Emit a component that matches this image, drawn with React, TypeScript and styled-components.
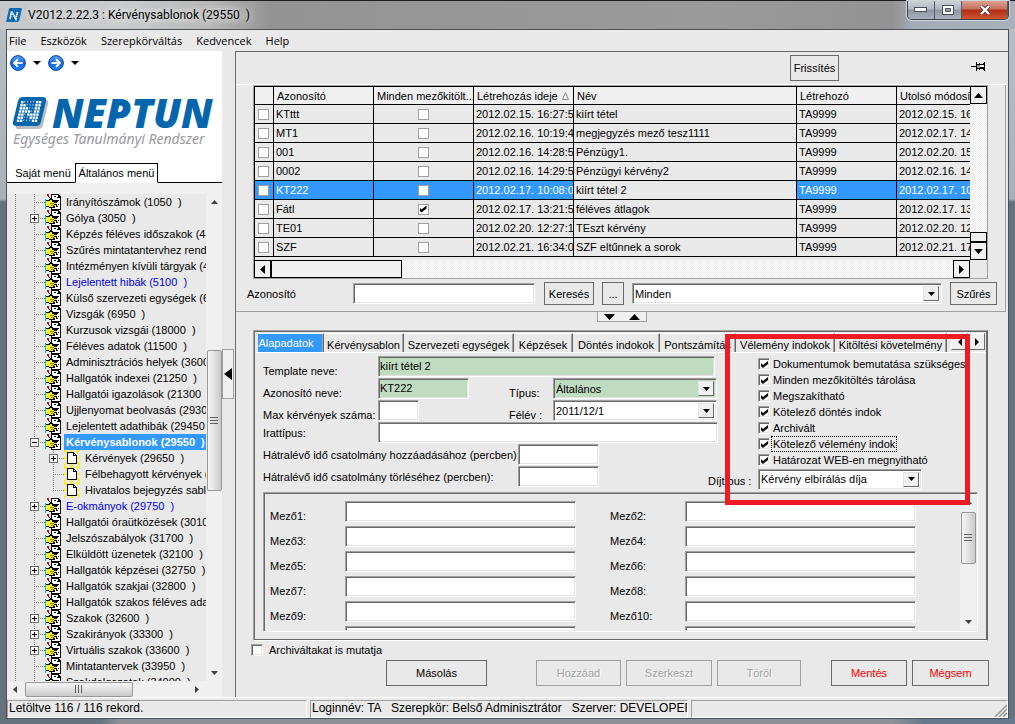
import React from "react";
import styled, { createGlobalStyle, css } from "styled-components";

const face = "#e9e9e9";
const accent = "#3399ff";
const shade = "#a0a0a0";
const dark = "#696969";

const GlobalStyle = createGlobalStyle`
  *, *::before, *::after { box-sizing: border-box; }
  html, body { margin: 0; padding: 0; }
  body { font-family: "Liberation Sans", Arial, sans-serif; font-size: 11px; line-height: 14px; color: #000; }
  button, input, select { font: inherit; color: inherit; margin: 0; }
  svg { flex: none; }
`;

/* ---------- window frame ---------- */

const Window = styled.div`
  height: 100vh;
  min-height: 700px;
  display: flex;
  flex-direction: column;
  padding: 0 6px 5px;
  overflow: hidden;
  background:
    linear-gradient(to right, #66747f 0, #66747f 100px, #8d9196 120px, #8d9196 88%, #66788c 91%) bottom / 100% 6px no-repeat,
    linear-gradient(to bottom, #b9bfc5 0, #a9b0b8 199px, #66727e 202px, #66727e 100%);
`;

const TitleBar = styled.header`
  display: flex;
  align-items: center;
  gap: 6px;
  height: 29px;
  flex: none;
  margin: 0 -6px;
  padding: 0 6px;
  border-top: 1px solid #1b1b22;
  background: linear-gradient(to right, #c4c8cb 0, #c9cbcc 120px, #b7b7b7 210px, #949494 270px, #9a9a9a 70%, #939393 88%, #a4acb8 90%, #a9b1bc 100%);
`;

const TitleText = styled.h1`
  flex: 1;
  margin: 0;
  font: 12px/20px Roboto, "Noto Sans", sans-serif;
  white-space: pre;
  text-shadow: 0 0 6px #eee, 0 0 8px #eee;
`;

const CaptionButtons = styled.div`
  display: flex;
  align-self: flex-start;
  border: 1px solid #3d444d;
  border-top: 0;
  border-radius: 0 0 5px 5px;
  overflow: hidden;
  box-shadow: 0 0 0 1px #d0d5da;
`;

const CaptionButton = styled.button<{ $close?: boolean }>`
  display: flex;
  align-items: center;
  justify-content: center;
  width: ${(p) => (p.$close ? 46 : 27)}px;
  height: 18px;
  padding: 0;
  border: 0;
  border-right: 1px solid #535b66;
  background: ${(p) =>
    p.$close
      ? "linear-gradient(#dca191 0, #c8705c 45%, #b02c12 50%, #d05530 100%)"
      : "linear-gradient(#cdd2d9 0, #b1b8c2 45%, #8c95a2 50%, #a9b1bd 100%)"};
`;

const Client = styled.div`
  flex: 1;
  min-height: 0;
  display: flex;
  flex-direction: column;
  border: 1px solid #4b5157;
  background: ${face};
`;

const MenuBar = styled.nav`
  display: flex;
  flex: none;
  gap: 14px;
  height: 21px;
  padding: 0 2px;
  font: 11px/20px "Open Sans", "Noto Sans", sans-serif;
`;

const MenuItem = styled.button`
  padding: 0;
  border: 0;
  background: none;
`;

const Body = styled.div`
  flex: 1;
  min-height: 0;
  display: flex;
`;

/* ---------- left side ---------- */

const Sidebar = styled.aside`
  width: 215px;
  flex: none;
  display: flex;
  flex-direction: column;
  background: #f0f0f0;
`;

const Brand = styled.div`
  height: 112px;
  flex: none;
  padding: 3px 2px 0;
  background: #fff;
`;

const NavRow = styled.div`
  display: flex;
  align-items: center;
  height: 18px;
`;

const NavButton = styled.button`
  display: flex;
  align-items: center;
  gap: 7px;
  width: 38px;
  padding: 0 0 0 1px;
  border: 0;
  background: none;
`;

const LogoRow = styled.div`
  display: flex;
  align-items: center;
  gap: 3px;
  height: 36px;
  margin-top: 23px;
  padding-left: 4px;
`;

const LogoName = styled.span`
  font: italic 800 40px/36px "Open Sans", sans-serif;
  color: #0566ad;
`;

const LogoTag = styled.p`
  margin: 0;
  padding-left: 4px;
  font: italic 14px/16px "Noto Sans", "Open Sans", sans-serif;
  color: #98999c;
  white-space: nowrap;
`;

const SideTabs = styled.div`
  display: flex;
  height: 20px;
  flex: none;
  background: #fff;
`;

const SideTab = styled.button<{ $on?: boolean }>`
  width: ${(p) => (p.$on ? 83 : 68)}px;
  padding: ${(p) => (p.$on ? "0" : "1px 0 0 4px")};
  text-align: center;
  background: #fff;
  border: 1px solid #000;
  border-bottom-color: ${(p) => (p.$on ? "#fff" : "#000")};
  white-space: nowrap;
  ${(p) => !p.$on && css`border-width: 0 0 1px;`}
`;

const SideTabRest = styled.div`
  flex: 1;
  border-bottom: 1px solid #000;
`;

const TreeArea = styled.div`
  display: flex;
  flex: 1;
  min-height: 0;
  margin-top: 11px;
`;

const Tree = styled.ul`
  flex: 1;
  min-width: 0;
  margin: 0;
  padding: 0;
  overflow: hidden;
  list-style: none;
  background: ${face};
`;

const TreeRow = styled.li`
  display: flex;
  height: 16px;
  white-space: pre;
`;

const TreeLabel = styled.span<{ $on?: boolean; $blue?: boolean }>`
  flex: 1;
  margin-left: 3px;
  padding-left: 2px;
  line-height: 16px;
  color: ${(p) => (p.$on ? "#fff" : p.$blue ? "#0000f0" : "#000")};
  ${(p) => p.$on && css`background: ${accent}; font-weight: bold;`}
`;

/* ---------- scroll bars ---------- */

const SoftBar = styled.div<{ $across?: boolean }>`
  display: flex;
  flex: none;
  align-items: center;
  flex-direction: ${(p) => (p.$across ? "row" : "column")};
  ${(p) => (p.$across ? "height: 16px;" : "width: 16px;")}
  background: #f0f0f0;
`;

const SoftArrow = styled.button`
  display: flex;
  align-items: center;
  justify-content: center;
  flex: none;
  width: 16px;
  height: 16px;
  padding: 0;
  border: 0;
  background: none;
`;

const SoftThumb = styled.div<{ $across?: boolean; $size: number }>`
  display: flex;
  flex: none;
  align-items: center;
  justify-content: center;
  border: 1px solid #979797;
  border-radius: 2px;
  ${(p) =>
    p.$across
      ? css`width: ${p.$size}px; height: 15px; background: linear-gradient(#f5f5f5, #e3e3e3 45%, #c9c9cb);`
      : css`height: ${p.$size}px; width: 15px; background: linear-gradient(to right, #f5f5f5, #e3e3e3 45%, #c9c9cb);`}
`;

const Spring = styled.div<{ $grow?: number }>`
  flex: ${(p) => p.$grow ?? 1};
`;

const HardBar = styled.div<{ $across?: boolean }>`
  display: flex;
  flex: none;
  flex-direction: ${(p) => (p.$across ? "row" : "column")};
  ${(p) => (p.$across ? "height: 18px;" : "width: 17px;")}
  background: repeating-conic-gradient(#fff 0 25%, #eaeaea 0 50%) 0 0 / 2px 2px;
`;

const HardArrow = styled.button`
  display: flex;
  align-items: center;
  justify-content: center;
  flex: none;
  width: 17px;
  height: 18px;
  padding: 0;
  border: 1px solid #000;
  background: #f0f0f0;
`;

const HardThumb = styled.div<{ $w: number; $h: number }>`
  width: ${(p) => p.$w}px;
  height: ${(p) => p.$h}px;
  border: 1px solid #000;
  background: #f0f0f0;
`;

/* ---------- splitters ---------- */

const SideSplitter = styled.div`
  display: flex;
  flex: none;
  flex-direction: column;
  width: 13px;
`;

const CollapseSide = styled.button`
  display: flex;
  align-items: center;
  justify-content: center;
  width: 12px;
  height: 50px;
  padding: 0;
  border: 1px solid ${shade};
  background: #f0f0f0;
`;

const MidSplitter = styled.div`
  display: flex;
  justify-content: center;
  flex: none;
  height: 18px;
`;

const CollapseMid = styled.button`
  display: flex;
  align-items: center;
  justify-content: center;
  gap: 14px;
  width: 50px;
  height: 10px;
  padding: 0;
  border: 1px solid ${shade};
  border-top: 0;
  background: #f0f0f0;
`;

/* ---------- controls ---------- */

const Button = styled.button<{ $w: number; $tall?: boolean; $red?: boolean }>`
  width: ${(p) => p.$w}px;
  height: ${(p) => (p.$tall ? 26 : 23)}px;
  flex: none;
  padding: 0;
  border: 1px solid ${dark};
  background: ${face};
  color: ${(p) => (p.$red ? "#f00" : "#000")};
  &:disabled {
    border-color: ${shade};
    color: ${shade};
    text-shadow: 1px 1px 0 #fff;
  }
`;

const sunken = css`
  border: 1px solid;
  border-color: ${shade} #fff #fff ${shade};
  box-shadow: inset 1px 1px 0 ${dark}, inset -1px -1px 0 #e3e3e3;
`;

const TextBox = styled.input<{ $w: number; $green?: boolean }>`
  ${sunken}
  width: ${(p) => p.$w}px;
  height: 21px;
  padding: 0 1px 1px;
  border-radius: 0;
  outline: 0;
  background: ${(p) => (p.$green ? "#c0dcc0" : "#fff")};
`;

const SelectFrame = styled.span<{ $w?: number; $green?: boolean }>`
  ${sunken}
  display: flex;
  height: 21px;
  padding: 2px;
  ${(p) => (p.$w ? `width: ${p.$w}px;` : "flex: 1;")}
  background: ${(p) => (p.$green ? "#c0dcc0" : "#fff")};
`;

const SelectBox = styled.select`
  appearance: none;
  flex: 1;
  min-width: 0;
  padding: 0;
  border: 0;
  outline: 0;
  background: none;
`;

const SelectArrow = styled.span`
  display: flex;
  align-items: center;
  justify-content: center;
  width: 16px;
  border: 1px solid;
  border-color: #e3e3e3 ${dark} ${dark} #e3e3e3;
  background: #f0f0f0;
`;

const Check = styled.input.attrs({ type: "checkbox" })<{ $flat?: boolean }>`
  appearance: none;
  display: inline-flex;
  flex: none;
  width: ${(p) => (p.$flat ? 11 : 12)}px;
  height: ${(p) => (p.$flat ? 11 : 12)}px;
  border: 1px solid ${shade};
  background: #fff;
  ${(p) => !p.$flat && sunken}
  &:checked::before {
    content: "";
    width: 7px;
    height: 7px;
    margin: ${(p) => (p.$flat ? "1px" : "2px 0 0 2px")};
    background: #000;
    clip-path: polygon(0 28%, 28% 57%, 100% 0, 100% 42%, 28% 100%, 0 72%);
  }
`;

/* ---------- right side ---------- */

const Main = styled.main`
  flex: 1;
  min-width: 0;
  display: flex;
  flex-direction: column;
  border-left: 1px solid ${dark};
  border-top: 1px solid ${dark};
`;

const ToolRow = styled.div`
  display: flex;
  flex: none;
  align-items: flex-start;
  justify-content: flex-end;
  height: 33px;
  margin-right: 2px;
  padding: 3px 20px 0 0;
  gap: 132px;
  border-bottom: 1px solid #fff;
`;

const PinButton = styled.button`
  padding: 6px 0 0;
  border: 0;
  background: none;
`;

const ListPanel = styled.section`
  flex: none;
  margin-right: 2px;
  padding: 0 17px 0 17px;
  border-right: 1px solid ${shade};
  border-bottom: 1px solid ${shade};
`;

const Grid = styled.div`
  display: grid;
  grid-template-columns: minmax(0, 1fr) 17px;
  border: 1px solid ${shade};
`;

const TableClip = styled.div`
  height: 174px;
  overflow: hidden;
  border-top: 1px solid #000;
  border-left: 1px solid #000;
`;

const Table = styled.table`
  width: calc(100% + 27px);
  table-layout: fixed;
  border-spacing: 0;
`;

const Col = styled.col<{ $w?: number }>`
  ${(p) => p.$w && `width: ${p.$w}px;`}
`;

const Th = styled.th`
  height: 18px;
  padding: 0 0 0 3px;
  border: solid #000;
  border-width: 0 1px 1px 0;
  background: #f0f0f0;
  font-weight: normal;
  text-align: left;
  white-space: nowrap;
  overflow: hidden;
`;

const SortMark = styled.svg`
  margin-left: 4px;
`;

const Td = styled.td<{ $on?: boolean; $center?: boolean }>`
  height: 19px;
  padding: 0 0 0 2px;
  border: solid #000;
  border-width: 0 1px 1px 0;
  white-space: nowrap;
  overflow: hidden;
  ${(p) => p.$center && "text-align: center; line-height: 0; padding: 0 1px 0 0;"}
  ${(p) => p.$on && `background: ${accent}; color: #fff;`}
`;

const SearchRow = styled.div`
  display: flex;
  align-items: center;
  height: 32px;
  margin: 0 -9px 0 -7px;
  padding-bottom: 3px;
`;

const SearchLabel = styled.label`
  flex: none;
  width: 107px;
  padding-left: 1px;
`;

const SearchTools = styled.div`
  display: flex;
  flex: 1;
  align-items: center;
  gap: 8px;
  padding-left: 9px;
`;

const Details = styled.section`
  position: relative;
  flex: 1;
  min-height: 0;
  display: flex;
  flex-direction: column;
  margin: 0 20px 0 17px;
  border: 1px solid;
  border-color: ${shade} ${dark} #fff ${shade};
  box-shadow: inset 1px 1px 0 ${dark}, inset -1px -1px 0 ${dark};
  padding: 2px 2px 0;
`;

const TabRow = styled.div`
  display: flex;
  flex: none;
  height: 20px;
  padding-left: 2px;
  border-bottom: 1px solid #fff;
`;

const TabList = styled.div`
  display: flex;
  flex: 1;
  min-width: 0;
  overflow: hidden;
`;

const Tab = styled.button<{ $w: number; $on?: boolean }>`
  flex: none;
  width: ${(p) => p.$w}px;
  height: 19px;
  padding: 3px 0 0;
  text-align: center;
  white-space: nowrap;
  border: 0;
  border-top: 1px solid #fff;
  border-right: 1px solid ${dark};
  box-shadow: inset -1px 0 0 ${shade};
  background: ${face};
  ${(p) => p.$on && css`background: ${accent}; color: #fff; padding: 0 9px 0 0;`}
`;

const TabArrow = styled.button`
  display: flex;
  align-items: center;
  justify-content: center;
  width: 17px;
  height: 17px;
  padding: 0;
  border: 1px solid;
  border-color: #fff ${dark} ${dark} #fff;
  background: #f0f0f0;
`;

const Form = styled.div`
  display: flex;
  flex: none;
  height: 139px;
  padding: 3px 0 0 7px;
`;

const Fields = styled.div`
  display: grid;
  grid-auto-rows: 22px;
  width: 455px;
  flex: none;
`;

const FieldRow = styled.div`
  display: flex;
  align-items: flex-start;
`;

const FieldLabel = styled.label<{ $w: number; $low?: boolean }>`
  flex: none;
  width: ${(p) => p.$w}px;
  padding-top: ${(p) => (p.$low ? 9 : 5)}px;
  line-height: 13px;
  white-space: nowrap;
`;

const FieldGap = styled.span<{ $w: number }>`
  flex: none;
  width: ${(p) => p.$w}px;
`;

const Options = styled.div`
  flex: 1;
  display: flex;
  flex-direction: column;
  align-items: stretch;
  padding-left: 40px;
`;

const OptionRow = styled.label`
  display: flex;
  align-items: center;
  gap: 2px;
  height: 16px;
  white-space: nowrap;
`;

const OptionText = styled.span<{ $focus?: boolean }>`
  padding: 0 1px;
  outline: ${(p) => (p.$focus ? "1px dotted #000" : "none")};
`;

const FeeRow = styled.div`
  display: flex;
  align-items: center;
  height: 22px;
  margin: 0 0 0 -50px;
`;

const FieldBox = styled.div`
  display: flex;
  flex: 1;
  min-height: 0;
  margin: 0 7px 8px 7px;
  border: 1px solid;
  border-color: ${shade} #fff #fff ${shade};
  box-shadow: inset 1px 1px 0 ${dark};
  padding: 1px;
`;

const FieldGrid = styled.div`
  flex: 1;
  min-width: 0;
  display: grid;
  grid-template-columns: 340px 340px;
  grid-auto-rows: 25px;
  align-content: start;
  overflow: hidden;
  padding: 7px 0 0 5px;
`;

const CustomField = styled.div`
  display: flex;
  align-items: flex-start;
`;

const CustomLabel = styled.label`
  width: 75px;
  padding-top: 8px;
`;

const Highlight = styled.div`
  position: absolute;
  top: 3px;
  right: 17px;
  width: 245px;
  height: 171px;
  border: 5px solid #ed1c24;
  pointer-events: none;
`;

const ArchiveRow = styled.label`
  display: flex;
  flex: none;
  align-items: center;
  gap: 6px;
  height: 18px;
  padding-left: 15px;
`;

const ActionRow = styled.div`
  display: flex;
  flex: none;
  align-items: center;
  justify-content: flex-end;
  gap: 5px;
  height: 38px;
  padding: 0 19px 10px 0;
`;

/* ---------- status bar ---------- */

const StatusBar = styled.footer`
  display: flex;
  flex: none;
  gap: 3px;
  height: 21px;
  padding-top: 2px;
  border-top: 1px solid #fff;
  font-size: 12px;
  line-height: 17px;
`;

const StatusCell = styled.div<{ $w?: number }>`
  ${(p) => (p.$w ? `flex: none; width: ${p.$w}px;` : "flex: 1;")}
  display: flex;
  justify-content: space-between;
  align-items: flex-end;
  padding-left: 1px;
  border: 1px solid;
  border-color: ${shade} #fff #fff ${shade};
  white-space: pre;
  overflow: hidden;
`;

/* ---------- drawings ---------- */

type Dir = "up" | "down" | "left" | "right";
const shapes: Record<Dir, string> = {
  up: "0,1 .5,0 1,1",
  down: "0,0 1,0 .5,1",
  left: "1,0 0,.5 1,1",
  right: "0,0 1,.5 0,1",
};

const Arrow = ({ dir, w, h, fill = "#000" }: { dir: Dir; w: number; h: number; fill?: string }) => (
  <svg width={w} height={h} viewBox="0 0 1 1" preserveAspectRatio="none">
    <polygon points={shapes[dir]} fill={fill} />
  </svg>
);

const Grip = ({ across }: { across?: boolean }) => (
  <svg width="8" height="8" shapeRendering="crispEdges">
    <path d={across ? "M1 0v8M4 0v8M7 0v8" : "M0 1h8M0 4h8M0 7h8"} transform={across ? "translate(-.5 0)" : "translate(0 -.5)"} stroke="#606060" />
  </svg>
);

const RoundArrow = ({ flip }: { flip?: boolean }) => (
  <svg width="16" height="16" viewBox="0 0 16 16">
    <defs>
      <linearGradient id="ball" x1="0" y1="0" x2="0" y2="1">
        <stop offset="0" stopColor="#5aa0f4" />
        <stop offset=".5" stopColor="#1668e0" />
        <stop offset="1" stopColor="#1a8af6" />
      </linearGradient>
    </defs>
    <circle cx="8" cy="8" r="7.4" fill="url(#ball)" stroke="#123f9c" />
    <path d={flip ? "M3.500 8h8M8 4.200 11.800 8 8 11.800" : "M12.500 8h-8M8 4.200 4.200 8 8 11.800"} fill="none" stroke="#fff" strokeWidth="2" />
  </svg>
);

const nDots = [
  "1000011", "1100011", "1110011", "1111011", "1101111", "1100111", "1100011",
];

const AppMark = () => (
  <svg width="16" height="16" viewBox="0 0 16 16">
    <path d="M4 1h11q1 0 .8 1l-2.500 11q-.4 2-2 2H1Q0 15 .3 14L3 2q.2-1 1-1z" fill="#0a6ab4" />
    <path d="M4 12 5.600 4.500 9.800 12 11.600 4.500" fill="none" stroke="#fff" strokeWidth="1.800" strokeDasharray="1.600 .4" />
  </svg>
);

const LogoMark = () => (
  <svg width="36" height="34" viewBox="0 0 36 34">
    <path d="M9 4h23q4 0 3 4l-5 21q-1 4-5 4H5q-3 0-2-3z" fill="#b9bcc0" />
    <path d="M10 1h20q4 0 3 4l-5 21q-1 4-5 4H3q-4 0-3-4L5 5q1-4 5-4z" fill="#0566ad" />
    <g fill="#fff">
      {Array.from({ length: 7 }, (_, r) =>
        Array.from({ length: 7 }, (_, c) => {
          const hit = nDots[r][c] === "1";
          const s = hit ? 2.4 : 1.4;
          return <rect key={`${r}-${c}`} x={8 + c * 3 - r * 0.7} y={5 + r * 3.1} width={s} height={s} opacity={hit ? 1 : 0.55} />;
        })
      )}
    </g>
  </svg>
);

const HandIcon = () => (
  <svg width="16" height="16" viewBox="0 0 16 16" shapeRendering="crispEdges">
    <path d="M6 0h8v1h1v1h1v14H6z" fill="#000" />
    <path d="M7 1h6v3h2v11H7z" fill="#fff" />
    <path d="M13 6h1v1h-1zM11 8h1v1h-1zM13 10h1v1h-1zM11 12h2v1h-2zM8 13h2v1H8zM9 2h2v1H9zM12 3h1v1h-1z" fill="#000" />
    <path d="M0 5h1v10H0z" fill="#00c8d0" />
    <path d="M1 6h2l1-1h3l1 1h5v2h-2v2h1v2h-2v2H4v-1H1z" fill="#000" />
    <path d="M1 7h3l1-1h2v2h5v0h-3v1h2v1H9v1h2v1H8v1H4v-1H1z" fill="#f7ee3a" />
    <path d="M5 9h4v1H5zM6 11h3v1H6z" fill="#8a7a00" />
    <path d="M3 2h1v1h1v1h1v1h1v1h1v1H7V6H6V5H5V4H4V3H3z" fill="#000" />
    <path d="M2 0h2v2H2z" fill="#d01010" />
    <path d="M4 3l7 6" stroke="#000" />
  </svg>
);

const PageIcon = () => (
  <svg width="16" height="16" viewBox="0 0 16 16" shapeRendering="crispEdges">
    <path d="M0 0l4 4M15 0l-3 3M0 15l4-3M16 15l-3-3M0 8h3M14 8h2M7 0v2M8 14v2" stroke="#ffee00" strokeWidth="1.500" />
    <path d="M3 2h7v1h1v1h1v1h1v9H3z" fill="#000" />
    <path d="M4 3h5v3h3v7H4z" fill="#fff" />
    <path d="M10 4h1v1h-1z" fill="#fff" />
  </svg>
);

const PinIcon = () => (
  <svg width="15" height="11" viewBox="0 0 15 11" shapeRendering="crispEdges">
    <path d="M0 5h5v1H0zM5 1h1v9H5zM6 3h3v1H6zM6 7h3v1H6zM8 2h1v1H8zM8 8h1v1H8zM9 3h4v1H9zM9 6h4v2H9zM13 1h1v9h-1zM12 2h1v1h-1zM12 8h1v1h-1z" fill="#000" />
    <path d="M6 4h3v3H6z" fill="#9a9a9a" />
    <path d="M9 4h4v2H9z" fill="#f4f4f4" />
  </svg>
);

const ResizeGrip = () => (
  <svg width="13" height="13" viewBox="0 0 13 13">
    <path d="M1 13 13 1M5 13l8-8M9 13l4-4" stroke="#909090" strokeWidth="1.300" />
  </svg>
);

type Node = { text: string; box?: "+" | "-"; deep?: boolean; last?: boolean; blue?: boolean; on?: boolean };

const Branch = ({ node }: { node: Node }) => {
  const x = node.deep ? 46 : 27;
  return (
    <svg width={node.deep ? 57 : 38} height="16" shapeRendering="crispEdges">
      <g stroke="#808080" strokeDasharray="1 1">
        <path d="M8.500 0v16" />
        <path d="M27.500 0v16" />
        {node.deep && <path d={`M46.500 0v${node.last ? 8 : 16}`} />}
        <path d={`M${x} 8.500h11`} />
      </g>
      {node.box && (
        <>
          <rect x={x - 3.5} y="4.500" width="8" height="8" fill="#f4f4f4" stroke="#707070" />
          <path d={node.box === "+" ? `M${x - 2} 8.500h5M${x + 0.5} 6v5` : `M${x - 2} 8.500h5`} stroke="#000" />
        </>
      )}
    </svg>
  );
};

/* ---------- data ---------- */

const nodes: Node[] = [
  { text: "Irányítószámok (1050  )" },
  { text: "Gólya (3050  )", box: "+" },
  { text: "Képzés féléves időszakok (4400  )" },
  { text: "Szűrés mintatantervhez rendelt" },
  { text: "Intézményen kívüli tárgyak (4500  )" },
  { text: "Lejelentett hibák (5100  )", blue: true },
  { text: "Külső szervezeti egységek (6800  )" },
  { text: "Vizsgák (6950  )" },
  { text: "Kurzusok vizsgái (18000  )" },
  { text: "Féléves adatok (11500  )" },
  { text: "Adminisztrációs helyek (3600  )" },
  { text: "Hallgatók indexei (21250  )" },
  { text: "Hallgatói igazolások (21300  )" },
  { text: "Ujjlenyomat beolvasás (29300  )" },
  { text: "Lejelentett adathibák (29450  )" },
  { text: "Kérvénysablonok (29550  )", box: "-", on: true },
  { text: "Kérvények (29650  )", box: "+", deep: true },
  { text: "Félbehagyott kérvények (29700  )", deep: true },
  { text: "Hivatalos bejegyzés sablonok", deep: true, last: true },
  { text: "E-okmányok (29750  )", box: "+", blue: true },
  { text: "Hallgatói óraütközések (30100  )" },
  { text: "Jelszószabályok (31700  )" },
  { text: "Elküldött üzenetek (32100  )" },
  { text: "Hallgatók képzései (32750  )", box: "+" },
  { text: "Hallgatók szakjai (32800  )" },
  { text: "Hallgatók szakos féléves adatai" },
  { text: "Szakok (32600  )", box: "+" },
  { text: "Szakirányok (33300  )", box: "+" },
  { text: "Virtuális szakok (33600  )", box: "+" },
  { text: "Mintatantervek (33950  )" },
  { text: "Szakdolgozatok (34000  )" },
];

const records = [
  ["KTttt", "2012.02.15. 16:27:53", "kiírt tétel", "2012.02.15. 16:27"],
  ["MT1", "2012.02.16. 10:19:44", "megjegyzés mező tesz1111", "2012.02.17. 14:10"],
  ["001", "2012.02.16. 14:28:51", "Pénzügy1.", "2012.02.20. 15:02"],
  ["0002", "2012.02.16. 14:29:50", "Pénzügyi kérvény2", "2012.02.16. 14:29"],
  ["KT222", "2012.02.17. 10:08:03", "kiírt tétel 2", "2012.02.17. 10:08"],
  ["Fátl", "2012.02.17. 13:21:55", "féléves átlagok", "2012.02.17. 13:21"],
  ["TE01", "2012.02.20. 12:27:10", "TEszt kérvény", "2012.02.20. 12:27"],
  ["SZF", "2012.02.21. 16:34:02", "SZF eltűnnek a sorok", "2012.02.21. 17:01"],
];

const tabs: [string, number][] = [
  ["Kérvénysablon", 80],
  ["Szervezeti egységek", 110],
  ["Képzések", 59],
  ["Döntés indokok", 87],
  ["Pontszámítás", 76],
  ["Vélemény indokok", 99],
  ["Kitöltési követelmény", 112],
  ["", 60],
];

const options = [
  "Dokumentumok bemutatása szükséges",
  "Minden mezőkitöltés tárolása",
  "Megszakítható",
  "Kötelező döntés indok",
  "Archivált",
  "Kötelező vélemény indok",
  "Határozat WEB-en megnyitható",
];

const Select = ({ id, value, w, green }: { id: string; value: string; w?: number; green?: boolean }) => (
  <SelectFrame $w={w} $green={green}>
    <SelectBox id={id} aria-label={value} defaultValue={value}>
      <option>{value}</option>
    </SelectBox>
    <SelectArrow>
      <Arrow dir="down" w={7} h={4} />
    </SelectArrow>
  </SelectFrame>
);

export default function App() {
  return (
    <>
      <GlobalStyle />
      <Window>
        <TitleBar>
          <AppMark />
          <TitleText>V2012.2.22.3 : Kérvénysablonok (29550  )</TitleText>
          <CaptionButtons>
            <CaptionButton aria-label="Kis méret">
              <svg width="14" height="6"><rect x=".5" y=".5" width="12" height="4" fill="#fff" stroke="#4a5058" /></svg>
            </CaptionButton>
            <CaptionButton aria-label="Teljes méret">
              <svg width="12" height="10"><path d="M.5.5h11v9H.5zM3.500 3.500v3h5v-3z" fill="#fff" fillRule="evenodd" stroke="#4a5058" /></svg>
            </CaptionButton>
            <CaptionButton $close aria-label="Bezárás">
              <svg width="12" height="10" viewBox="0 0 12 10">
                <path d="M2 1l8 8M10 1 2 9" stroke="#5a3a3a" strokeWidth="4" />
                <path d="M2 1l8 8M10 1 2 9" stroke="#fff" strokeWidth="2.400" />
              </svg>
            </CaptionButton>
          </CaptionButtons>
        </TitleBar>
        <Client>
          <MenuBar>
            {["File", "Eszközök", "Szerepkörváltás", "Kedvencek", "Help"].map((m) => (
              <MenuItem key={m}>{m}</MenuItem>
            ))}
          </MenuBar>
          <Body>
            <Sidebar>
              <Brand>
                <NavRow>
                  <NavButton aria-label="Vissza"><RoundArrow /><Arrow dir="down" w={8} h={4} /></NavButton>
                  <NavButton aria-label="Előre"><RoundArrow flip /><Arrow dir="down" w={8} h={4} /></NavButton>
                </NavRow>
                <LogoRow>
                  <LogoMark />
                  <LogoName>NEPTUN</LogoName>
                </LogoRow>
                <LogoTag>Egységes Tanulmányi Rendszer</LogoTag>
              </Brand>
              <SideTabs>
                <SideTab>Saját menü</SideTab>
                <SideTab $on>Általános menü</SideTab>
                <SideTabRest />
              </SideTabs>
              <TreeArea>
                <Tree>
                  {nodes.map((n) => (
                    <TreeRow key={n.text}>
                      <Branch node={n} />
                      {n.deep ? <PageIcon /> : <HandIcon />}
                      <TreeLabel $on={n.on} $blue={n.blue}>{n.text}</TreeLabel>
                    </TreeRow>
                  ))}
                </Tree>
                <SoftBar>
                  <SoftArrow aria-label="Fel"><Arrow dir="up" w={7} h={4} fill="#404040" /></SoftArrow>
                  <Spring $grow={140} />
                  <SoftThumb $size={141}><Grip /></SoftThumb>
                  <Spring $grow={174} />
                  <SoftArrow aria-label="Le"><Arrow dir="down" w={7} h={4} fill="#404040" /></SoftArrow>
                </SoftBar>
              </TreeArea>
              <SoftBar $across>
                <SoftArrow aria-label="Balra"><Arrow dir="left" w={4} h={7} fill="#404040" /></SoftArrow>
                <Spring $grow={2} />
                <SoftThumb $across $size={108}><Grip across /></SoftThumb>
                <Spring $grow={56} />
                <SoftArrow aria-label="Jobbra"><Arrow dir="right" w={4} h={7} fill="#404040" /></SoftArrow>
                <FieldGap $w={17} />
              </SoftBar>
            </Sidebar>
            <SideSplitter>
              <Spring />
              <CollapseSide aria-label="Menü elrejtése"><Arrow dir="left" w={8} h={12} /></CollapseSide>
              <Spring />
            </SideSplitter>
            <Main>
              <ToolRow>
                <Button $w={49} $tall>Frissítés</Button>
                <PinButton aria-label="Rögzítés"><PinIcon /></PinButton>
              </ToolRow>
              <ListPanel>
                <Grid>
                  <TableClip>
                    <Table>
                      <colgroup>
                        <Col $w={19} /><Col $w={100} /><Col $w={100} /><Col $w={100} /><Col /><Col $w={100} /><Col $w={100} />
                      </colgroup>
                      <thead>
                        <tr>
                          <Th />
                          <Th>Azonosító</Th>
                          <Th>Minden mezőkitölt...</Th>
                          <Th>
                            Létrehozás ideje
                            <SortMark width="7" height="8"><path d="M.5 7.500h6L3.500.5z" fill="none" stroke="#909090" /></SortMark>
                          </Th>
                          <Th>Név</Th>
                          <Th>Létrehozó</Th>
                          <Th>Utolsó módosítás</Th>
                        </tr>
                      </thead>
                      <tbody>
                        {records.map(([id, made, name, mod]) => {
                          const on = id === "KT222";
                          return (
                            <tr key={id}>
                              <Td $on={on} $center><Check $flat aria-label={`${id} kijelölése`} /></Td>
                              <Td $on={on}>{id}</Td>
                              <Td $on={on} $center><Check $flat defaultChecked={id === "Fátl"} aria-label={`${id} mezőkitöltés`} /></Td>
                              <Td $on={on}>{made}</Td>
                              <Td>{name}</Td>
                              <Td $on={on}>TA9999</Td>
                              <Td $on={on}>{mod}</Td>
                            </tr>
                          );
                        })}
                      </tbody>
                    </Table>
                  </TableClip>
                  <HardBar>
                    <HardArrow aria-label="Fel"><Arrow dir="up" w={9} h={5} /></HardArrow>
                    <Spring />
                    <HardThumb $w={17} $h={10} />
                    <HardArrow aria-label="Le"><Arrow dir="down" w={9} h={5} /></HardArrow>
                  </HardBar>
                  <HardBar $across>
                    <HardArrow aria-label="Balra"><Arrow dir="left" w={5} h={9} /></HardArrow>
                    <HardThumb $w={131} $h={18} />
                    <Spring />
                    <HardArrow aria-label="Jobbra"><Arrow dir="right" w={5} h={9} /></HardArrow>
                  </HardBar>
                </Grid>
                <SearchRow>
                  <SearchLabel htmlFor="q">Azonosító</SearchLabel>
                  <TextBox id="q" $w={182} />
                  <SearchTools>
                    <Button $w={50}>Keresés</Button>
                    <Button $w={22}>...</Button>
                    <Select id="filter" value="Minden" />
                    <Button $w={47}>Szűrés</Button>
                  </SearchTools>
                </SearchRow>
              </ListPanel>
              <MidSplitter>
                <CollapseMid aria-label="Osztó">
                  <Arrow dir="down" w={11} h={6} />
                  <Arrow dir="up" w={11} h={6} />
                </CollapseMid>
              </MidSplitter>
              <Details>
                <TabRow>
                  <TabList>
                    <Tab $w={66} $on>Alapadatok</Tab>
                    {tabs.map(([t, w]) => (
                      <Tab key={t} $w={w}>{t}</Tab>
                    ))}
                  </TabList>
                  <TabArrow aria-label="Előző fülek"><Arrow dir="left" w={4} h={8} /></TabArrow>
                  <TabArrow aria-label="Következő fülek"><Arrow dir="right" w={4} h={8} /></TabArrow>
                </TabRow>
                <Form>
                  <Fields>
                    <FieldRow>
                      <FieldLabel $w={115} $low htmlFor="tpl">Template neve:</FieldLabel>
                      <TextBox id="tpl" $w={337} $green defaultValue="kiírt tétel 2" />
                    </FieldRow>
                    <FieldRow>
                      <FieldLabel $w={115} $low htmlFor="code">Azonosító neve:</FieldLabel>
                      <TextBox id="code" $w={91} $green defaultValue="KT222" />
                      <FieldGap $w={40} />
                      <FieldLabel $w={44} $low htmlFor="type">Típus:</FieldLabel>
                      <Select id="type" w={164} green value="Általános" />
                    </FieldRow>
                    <FieldRow>
                      <FieldLabel $w={115} $low htmlFor="max">Max kérvények száma:</FieldLabel>
                      <TextBox id="max" $w={41} />
                      <FieldGap $w={90} />
                      <FieldLabel $w={44} $low htmlFor="term">Félév :</FieldLabel>
                      <Select id="term" w={164} value="2011/12/1" />
                    </FieldRow>
                    <FieldRow>
                      <FieldLabel $w={115} htmlFor="doc">Irattípus:</FieldLabel>
                      <TextBox id="doc" $w={340} />
                    </FieldRow>
                    <FieldRow>
                      <FieldLabel $w={255} htmlFor="add">Hátralévő idő csatolmány hozzáadásához (percben):</FieldLabel>
                      <TextBox id="add" $w={81} />
                    </FieldRow>
                    <FieldRow>
                      <FieldLabel $w={255} htmlFor="del">Hátralévő idő csatolmány törléséhez (percben):</FieldLabel>
                      <TextBox id="del" $w={81} />
                    </FieldRow>
                  </Fields>
                  <Options>
                    {options.map((o) => (
                      <OptionRow key={o}>
                        <Check defaultChecked />
                        <OptionText $focus={o === "Kötelező vélemény indok"}>{o}</OptionText>
                      </OptionRow>
                    ))}
                    <FeeRow>
                      <FieldLabel $w={50} htmlFor="fee">Díjtípus :</FieldLabel>
                      <Select id="fee" w={164} value="Kérvény elbírálás díja" />
                    </FeeRow>
                  </Options>
                </Form>
                <FieldBox>
                  <FieldGrid>
                    {Array.from({ length: 12 }, (_, i) => (
                      <CustomField key={i}>
                        <CustomLabel htmlFor={`m${i}`}>{`Mező${i + 1}:`}</CustomLabel>
                        <TextBox id={`m${i}`} $w={231} />
                      </CustomField>
                    ))}
                  </FieldGrid>
                  <SoftBar>
                    <SoftArrow aria-label="Fel"><Arrow dir="up" w={7} h={4} fill="#404040" /></SoftArrow>
                    <Spring $grow={2} />
                    <SoftThumb $size={52}><Grip /></SoftThumb>
                    <Spring $grow={50} />
                    <SoftArrow aria-label="Le"><Arrow dir="down" w={7} h={4} fill="#404040" /></SoftArrow>
                  </SoftBar>
                </FieldBox>
                <Highlight />
              </Details>
              <ArchiveRow>
                <Check />
                Archiváltakat is mutatja
              </ArchiveRow>
              <ActionRow>
                <Button $w={101} $tall>Másolás</Button>
                <FieldGap $w={39} />
                <Button $w={85} $tall disabled>Hozzáad</Button>
                <Button $w={86} $tall disabled>Szerkeszt</Button>
                <Button $w={84} $tall disabled>Töröl</Button>
                <FieldGap $w={20} />
                <Button $w={76} $tall $red>Mentés</Button>
                <Button $w={77} $tall $red>Mégsem</Button>
              </ActionRow>
            </Main>
          </Body>
          <StatusBar>
            <StatusCell $w={300}>Letöltve 116 / 116 rekord.</StatusCell>
            <StatusCell $w={378}>Loginnév: TA   Szerepkör: Belső Adminisztrátor   Szerver: DEVELOPER</StatusCell>
            <StatusCell><span /><ResizeGrip /></StatusCell>
          </StatusBar>
        </Client>
      </Window>
    </>
  );
}
